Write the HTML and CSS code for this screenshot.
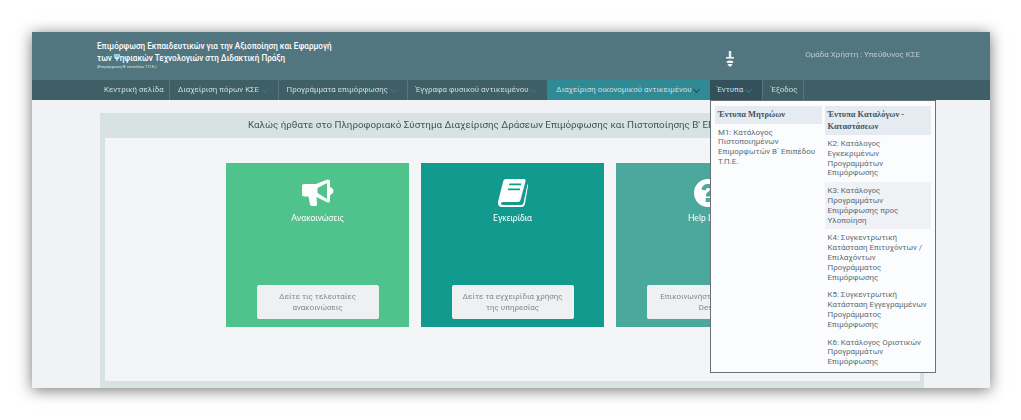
FILE: index.html
```html
<!DOCTYPE html>
<html lang="el">
<head>
    <meta charset="UTF-8">
    <meta name="viewport" content="width=device-width, initial-scale=1.0">
    <title>Επιμόρφωση Εκπαιδευτικών</title>
    <link rel="stylesheet" href="styles.css">
</head>
<body>
    <div class="window">
        <header class="top-bar">
            <div class="site-title">
                <p class="site-name">Επιμόρφωση Εκπαιδευτικών για την Αξιοποίηση και Εφαρμογή<br>των Ψηφιακών Τεχνολογιών στη Διδακτική Πράξη</p>
                <p class="site-sub">(Επιμόρφωση Β' επιπέδου Τ.Π.Ε.)</p>
            </div>
            <svg class="stamp" viewBox="0 0 10 16" width="10" height="16">
                <rect x="3.8" y="0" width="2.4" height="6" fill="#eef3f3"/>
                <rect x="1" y="6" width="8" height="1.6" fill="#eef3f3"/>
                <path d="M1.5 10.5 Q5 8.5 8.5 10.5 L8 12 H2 Z" fill="#eef3f3"/>
                <path d="M2.5 13 H7.5 L6 15.5 H4 Z" fill="#eef3f3"/>
            </svg>
            <div class="user-group">Ομάδα Χρήστη : Υπεύθυνος ΚΣΕ</div>
        </header>

        <nav class="main-nav">
            <a class="nav-item">Κεντρική σελίδα</a>
            <a class="nav-item has-caret">Διαχείριση πόρων ΚΣΕ</a>
            <a class="nav-item has-caret">Προγράμματα επιμόρφωσης</a>
            <a class="nav-item has-caret">Έγγραφα φυσικού αντικειμένου</a>
            <a class="nav-item has-caret active">Διαχείριση οικονομικού αντικειμένου</a>
            <div class="nav-item has-caret open">
                Έντυπα
                <div class="dropdown">
                    <div class="drop-col">
                        <h4>Έντυπα Μητρώων</h4>
                        <a>Μ1: Κατάλογος Πιστοποιημένων Επιμορφωτών Β΄ Επιπέδου Τ.Π.Ε.</a>
                    </div>
                    <div class="drop-col">
                        <h4>Έντυπα Καταλόγων - Καταστάσεων</h4>
                        <a>Κ2: Κατάλογος Εγκεκριμένων Προγραμμάτων Επιμόρφωσης</a>
                        <a class="hover">Κ3: Κατάλογος Προγραμμάτων Επιμόρφωσης προς Υλοποίηση</a>
                        <a>Κ4: Συγκεντρωτική Κατάσταση Επιτυχόντων / Επιλαχόντων Προγράμματος Επιμόρφωσης</a>
                        <a>Κ5: Συγκεντρωτική Κατάσταση Εγγεγραμμένων Προγράμματος Επιμόρφωσης</a>
                        <a>Κ6: Κατάλογος Οριστικών Προγραμμάτων Επιμόρφωσης</a>
                    </div>
                </div>
            </div>
            <a class="nav-item">Έξοδος</a>
        </nav>

        <main class="page">
            <section class="panel">
                <h2 class="panel-title">Καλώς ήρθατε στο Πληροφοριακό Σύστημα Διαχείρισης Δράσεων Επιμόρφωσης και Πιστοποίησης Β' ΕΠΙΠΕΔΟΥ Τ.Π.Ε.</h2>
                <div class="panel-body">
                    <div class="card card-green">
                        <svg class="card-icon" viewBox="0 0 32 28" width="32" height="28">
                            <path d="M0 7 Q0 5 2 5 H14 L25.5 0.5 Q27.5 0 28 2 V8 Q31.5 9.5 31.5 12 Q31.5 14.5 28 16 V22 Q27.5 24 25.5 23.5 L14.5 18 L15 25.5 Q15 27 13.5 27 H10 Q8.5 27 8 25.5 L6.5 17.5 H2 Q0 17.5 0 15.5 Z M15.5 9 V14 L25 20 V4 Z" fill="#fff" fill-rule="evenodd"/>
                        </svg>
                        <div class="card-title">Ανακοινώσεις</div>
                        <a class="card-btn">Δείτε τις τελευταίες ανακοινώσεις</a>
                    </div>
                    <div class="card card-teal">
                        <svg class="card-icon" viewBox="0 0 30 28" width="30" height="28">
                            <path d="M8 0 H26 Q28 0 27.5 2.5 L22.5 21 Q22 23 20 23 H5 Q3 23 3 24.5 Q3 26 5 26 H23 Q25 26 25.5 24 L29.5 5 Q30 5.5 30 7 L27 24.5 Q26.5 28 23 28 H4 Q0 28 0 24 Q0 22.5 0.5 21 L5 3 Q5.6 0 8 0 Z M11.5 4.5 L11 6.3 H23 L23.5 4.5 Z M10.2 9.5 L9.7 11.3 H21.7 L22.2 9.5 Z" fill="#fff" fill-rule="evenodd"/>
                        </svg>
                        <div class="card-title">Εγκειρίδια</div>
                        <a class="card-btn">Δείτε τα εγχειρίδια χρήσης της υπηρεσίας</a>
                    </div>
                    <div class="card card-sea">
                        <svg class="card-icon" viewBox="0 0 28 28" width="28" height="28">
                            <path d="M14 0 A14 14 0 1 1 14 28 A14 14 0 1 1 14 0 Z M14.3 5 C10.5 5 8 7 7.5 10.5 L11.5 11.5 C11.9 9.8 12.8 9 14 9 C15.3 9 16 9.7 16 10.6 C16 11.6 15.2 12.2 14 13 C12.5 14 11.8 15.2 11.8 17.5 H16 C16 16.2 16.5 15.7 17.6 15 C19.4 13.8 20.5 12.5 20.5 10.4 C20.5 7.2 18 5 14.3 5 Z M11.7 19 V23 H16.1 V19 Z" fill="#fff" fill-rule="evenodd"/>
                        </svg>
                        <div class="card-title">Help Desk</div>
                        <a class="card-btn">Επικοινωνήστε με το Help Desk</a>
                    </div>
                </div>
            </section>
        </main>
    </div>
</body>
</html>
```

FILE: styles.css
```css
* {
    margin: 0;
    padding: 0;
    box-sizing: border-box;
    font-family: Roboto, 'Liberation Sans', sans-serif;
}

html, body {
    height: 100%;
    overflow: hidden;
}

body {
    background-color: #ffffff;
    padding: 32px 31px 32px 32px;
}

.window {
    height: 356px;
    display: flex;
    flex-direction: column;
    background-color: #f0f2f6;
    box-shadow: 0 2px 14px rgba(0, 0, 0, 0.55);
    filter: blur(0.35px);
}

/* top bar */
.top-bar {
    height: 48px;
    display: flex;
    align-items: center;
    padding: 0 70px 0 65px;
    background-color: #52767f;
    color: #ffffff;
}

.site-title {
    width: 500px;
    margin-top: -1px;
}

.site-name {
    font-size: 8.15px;
    font-weight: 500;
    line-height: 11.5px;
}

.site-sub {
    font-size: 4px;
    line-height: 6px;
    color: #dde6e8;
}

.stamp {
    margin: 6px 0 0 128px;
}

.user-group {
    margin-left: auto;
    margin-top: -4px;
    font-size: 8px;
    color: #b9cbd0;
}

/* main menu */
.main-nav {
    height: 20px;
    display: flex;
    padding-left: 64px;
    background-color: #3f5f67;
}

.nav-item {
    position: relative;
    height: 20px;
    padding: 0 5px 0 8px;
    border-right: 1px solid #55747b;
    font-size: 7.9px;
    line-height: 20px;
    color: #d3dee0;
    white-space: nowrap;
}

.nav-item.has-caret {
    padding-right: 18.5px;
}

.nav-item.has-caret::after {
    content: "";
    position: absolute;
    right: 11px;
    top: 7px;
    width: 4px;
    height: 4px;
    border-right: 1.5px solid #3a7488;
    border-bottom: 1.5px solid #3a7488;
    transform: rotate(45deg);
}

.nav-item.active {
    background-color: #2f8a94;
    border-right: none;
}

.nav-item.active::after {
    border-color: #17505f;
}

.nav-item.open {
    background-color: #34505a;
    padding-left: 7px;
    width: 53px;
}

/* dropdown */
.dropdown {
    position: absolute;
    left: 0;
    top: 20px;
    z-index: 5;
    width: 226px;
    height: 273px;
    display: flex;
    gap: 3px;
    padding: 5px 4px;
    background-color: #fbfcfd;
    border: 1px solid #6b7276;
    white-space: normal;
}

.drop-col {
    width: 107px;
}

.drop-col h4 {
    padding: 3px;
    background-color: #e6ebf1;
    font-family: 'Liberation Serif', serif;
    font-size: 8.4px;
    font-weight: 700;
    line-height: 11.5px;
    color: #3c5560;
}

.drop-col a {
    display: block;
    padding: 4px 3px;
    font-size: 7.95px;
    line-height: 9.8px;
    color: #5a6b75;
}

.drop-col a.hover {
    background-color: #f0f2f5;
}

/* content */
.page {
    flex: 1;
    padding: 13px 66px 0 68px;
    min-height: 0;
}

.panel {
    height: 275px;
    display: flex;
    flex-direction: column;
    padding: 0 4px 7px 5px;
    background-color: #d6e3e1;
}

.panel-title {
    height: 25px;
    font-size: 9.8px;
    font-weight: 400;
    line-height: 24px;
    text-align: center;
    color: #44525a;
    white-space: nowrap;
}

.panel-body {
    flex: 1;
    display: flex;
    justify-content: center;
    gap: 12px;
    padding-top: 25px;
    background-color: #f3f5f7;
}

.card {
    width: 183px;
    height: 164px;
    display: flex;
    flex-direction: column;
    align-items: center;
    padding: 16px 31px 8px;
    color: #ffffff;
}

.card-green { background-color: #50c28c; }
.card-teal { background-color: #139a8f; }
.card-sea { background-color: #4aa89d; }

.card-title {
    margin-top: 6px;
    font-family: Lato, 'Open Sans', sans-serif;
    font-size: 8.6px;
}

.card-btn {
    width: 122px;
    height: 34px;
    margin-top: auto;
    padding: 3px 6px;
    display: flex;
    align-items: center;
    justify-content: center;
    text-align: center;
    background-color: #eef0f2;
    border-radius: 2px;
    font-size: 7.95px;
    line-height: 11px;
    color: #7f8a8e;
}
```
